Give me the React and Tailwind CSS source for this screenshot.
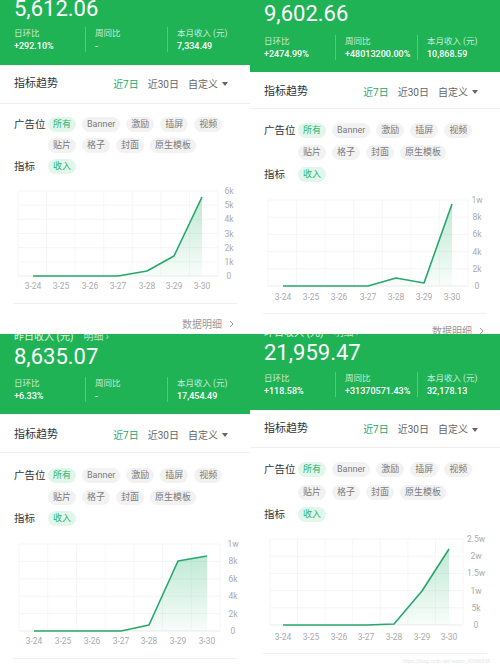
import React from 'react';

const FONT = { fontFamily: "Roboto, 'Noto Sans CJK SC', 'Noto Sans', sans-serif" };

const panels = [
  {
    key: 'tl',
    height: 'h-[334px]',
    header: 'h-[65px] pb-[13px]',
    numGap: 'mt-[5px]',
    value: '5,612.06',
    stats: [['日环比', '+292.10%'], ['周同比', '-'], ['本月收入 (元)', '7,334.49']],
    tabRow: 'h-[39px]',
    chipsBox: 'pt-[13px] gap-[6px]',
    chart: {
      top: 174, h: 129, cls: 'h-[129px]', left: 18, right: 218, plotTop: 191, plotBottom: 276,
      yLabels: ['6k', '5k', '4k', '3k', '2k', '1k', '0'], yLabelX: 229, xLabelY: 286,
      xs: [33, 61, 90, 118, 147, 174, 202], ys: [276, 276, 276, 276, 271, 256, 197],
    },
    link: 'h-[40px]',
  },
  {
    key: 'tr',
    height: 'h-[334px]',
    header: 'h-[72px] pb-[12px]',
    numGap: 'mt-[8px]',
    value: '9,602.66',
    stats: [['日环比', '+2474.99%'], ['周同比', '+48013200.00%'], ['本月收入 (元)', '10,868.59']],
    tabRow: 'h-[37px] pt-[4px]',
    chipsBox: 'pt-[14px] gap-[7px]',
    chart: {
      top: 182, h: 131, cls: 'h-[131px]', left: 18, right: 218, plotTop: 200, plotBottom: 286,
      yLabels: ['1w', '8k', '6k', '4k', '2k', '0'], yLabelX: 227, xLabelY: 297,
      xs: [33, 61, 89, 118, 146, 174, 202], ys: [286, 286, 286, 286, 278, 283, 204],
    },
    link: 'h-[34px]',
  },
  {
    key: 'bl',
    height: 'h-[333px]',
    header: 'h-[80px] pb-[12px]',
    numGap: 'mt-[7px]',
    value: '8,635.07',
    stats: [['日环比', '+6.33%'], ['周同比', '-'], ['本月收入 (元)', '17,454.49']],
    tabRow: 'h-[39px] pt-[4px]',
    chipsBox: 'pt-[15px] gap-[6.5px]',
    chart: {
      top: 192, h: 132, cls: 'h-[132px]', left: 19, right: 220, plotTop: 210, plotBottom: 297,
      yLabels: ['1w', '8k', '6k', '4k', '2k', '0'], yLabelX: 233, xLabelY: 307,
      xs: [34, 63, 92, 121, 149, 178, 207], ys: [297, 297, 297, 297, 291, 227, 222],
    },
    link: 'h-[40px]',
  },
  {
    key: 'br',
    height: 'h-[333px]',
    header: 'h-[76px] pb-[13px]',
    numGap: 'mt-[6px]',
    value: '21,959.47',
    stats: [['日环比', '+118.58%'], ['周同比', '+31370571.43%'], ['本月收入 (元)', '32,178.13']],
    tabRow: 'h-[38px] pt-[2px]',
    chipsBox: 'pt-[14px] gap-[7.5px]',
    chart: {
      top: 188, h: 131, cls: 'h-[131px]', left: 20, right: 213, plotTop: 205, plotBottom: 291,
      yLabels: ['2.5w', '2w', '1.5w', '1w', '5k', '0'], yLabelX: 226, xLabelY: 303,
      xs: [33, 61, 89, 116, 144, 172, 199], ys: [291, 291, 291, 291, 290, 257, 215],
    },
    watermark: true,
  },
];

const dates = ['3-24', '3-25', '3-26', '3-27', '3-28', '3-29', '3-30'];

function Chip({ label, active }) {
  return (
    <span
      className={
        active
          ? 'h-[15px] leading-[15px] px-[5px] rounded-full text-[9px] bg-[#e2f6eb] text-[#2bb36e]'
          : 'h-[15px] leading-[15px] px-[5px] rounded-full text-[9px] bg-[#f2f2f2] text-[#7a7a7a]'
      }
    >
      {label}
    </span>
  );
}

function Chart({ id, c }) {
  const rows = c.yLabels.length - 1;
  const step = (c.plotBottom - c.plotTop) / rows;
  const cell = (c.right - c.left) / 7;
  const pts = c.xs.map((x, i) => `${x},${c.ys[i]}`).join(' ');
  const area = `${c.xs[0]},${c.plotBottom} ${pts} ${c.xs[6]},${c.plotBottom}`;
  return (
    <svg className={`w-[250px] ${c.cls} block shrink-0`} viewBox={`0 ${c.top} 250 ${c.h}`} preserveAspectRatio="none">
      <defs>
        <linearGradient id={id} x1="0" y1="0" x2="0" y2="1">
          <stop offset="0" stopColor="#2bb673" stopOpacity="0.3" />
          <stop offset="1" stopColor="#2bb673" stopOpacity="0.03" />
        </linearGradient>
      </defs>
      {c.yLabels.map((l, i) => (
        <line key={l} x1={c.left} x2={c.right} y1={c.plotTop + i * step} y2={c.plotTop + i * step} stroke={i === rows ? '#e6e6e6' : '#f3f3f3'} strokeWidth="0.8" />
      ))}
      {Array.from({ length: 8 }).map((_, i) => (
        <line key={i} x1={c.left + i * cell} x2={c.left + i * cell} y1={c.plotTop} y2={c.plotBottom} stroke="#f4f4f4" strokeWidth="0.8" />
      ))}
      <polygon points={area} fill={`url(#${id})`} />
      <polyline points={pts} fill="none" stroke="#27a76c" strokeWidth="1.6" strokeLinejoin="round" />
      {c.yLabels.map((l, i) => (
        <text key={l} x={c.yLabelX} y={c.plotTop + i * step} fontSize="8.5" fill="#aaaaaa" textAnchor="middle" dominantBaseline="central" style={FONT}>
          {l}
        </text>
      ))}
      {dates.map((d, i) => (
        <text key={d} x={c.xs[i]} y={c.xLabelY} fontSize="8.5" fill="#aaaaaa" textAnchor="middle" dominantBaseline="central" style={FONT}>
          {d}
        </text>
      ))}
    </svg>
  );
}

function Panel({ p }) {
  return (
    <div className={`${p.height} w-[250px] overflow-hidden flex flex-col bg-white`}>
      <div className={`${p.header} shrink-0 overflow-hidden flex flex-col justify-end px-[14px] bg-[#20b356] text-white`}>
        <div className="text-[10px] leading-[14px] text-white/85 whitespace-nowrap">
          昨日收入 (元)<span className="ml-[10px] text-white/70">明细 ›</span>
        </div>
        <div className="text-[22px] leading-[26px] whitespace-nowrap">{p.value}</div>
        <div className={`${p.numGap} flex`}>
          {p.stats.map(([label, val], i) => (
            <div
              key={label}
              className={
                i === 0
                  ? 'w-[71px] flex flex-col gap-[1px]'
                  : i === 1
                  ? 'w-[82px] flex flex-col gap-[1px] border-l border-white/25 pl-[9px]'
                  : 'flex-1 flex flex-col gap-[1px] border-l border-white/25 pl-[9px]'
              }
            >
              <span className="text-[8.5px] leading-[12px] text-white/75 whitespace-nowrap">{label}</span>
              <span className="text-[9px] leading-[12px] font-medium whitespace-nowrap">{val}</span>
            </div>
          ))}
        </div>
      </div>

      <div className={`${p.tabRow} shrink-0 flex items-center px-[14px] border-b border-[#f0f0f0]`}>
        <span className="text-[11px] text-[#333333]">指标趋势</span>
        <div className="ml-auto flex items-center gap-[9px] pr-[8px] text-[10px]">
          <span className="text-[#22a86b]">近7日</span>
          <span className="text-[#666666]">近30日</span>
          <span className="text-[#666666] flex items-center gap-[4px]">
            自定义
            <svg width="6" height="4" viewBox="0 0 6 4">
              <path d="M0 0h6L3 4z" fill="#666666" />
            </svg>
          </span>
        </div>
      </div>

      <div className={`${p.chipsBox} shrink-0 flex flex-col px-[14px]`}>
        <div className="flex items-center h-[15px]">
          <span className="w-[34px] text-[10.5px] text-[#333333]">广告位</span>
          <div className="flex gap-[6px]">
            <Chip label="所有" active />
            <Chip label="Banner" />
            <Chip label="激励" />
            <Chip label="插屏" />
            <Chip label="视频" />
          </div>
        </div>
        <div className="flex items-center h-[15px]">
          <span className="w-[34px]" />
          <div className="flex gap-[6px]">
            <Chip label="贴片" />
            <Chip label="格子" />
            <Chip label="封面" />
            <Chip label="原生模板" />
          </div>
        </div>
        <div className="flex items-center h-[15px]">
          <span className="w-[34px] text-[10.5px] text-[#333333]">指标</span>
          <Chip label="收入" active />
        </div>
      </div>

      <Chart id={`g-${p.key}`} c={p.chart} />

      <div className="shrink-0 h-px mx-[13px] bg-[#f0f0f0]" />

      {p.link && (
        <div className={`${p.link} shrink-0 flex items-center justify-end gap-[7px] pr-[16px] text-[10px] text-[#999999]`}>
          数据明细
          <svg width="5" height="8" viewBox="0 0 5 8">
            <path d="M1 1l3 3-3 3" fill="none" stroke="#999999" strokeWidth="1" />
          </svg>
        </div>
      )}
      {p.watermark && (
        <div className="shrink-0 flex justify-end pr-[10px] pt-[4px] text-[5px] text-[#e6e6e6]">
          https://blog.csdn.net/weixin_43506858
        </div>
      )}
    </div>
  );
}

export default function App() {
  return (
    <div className="w-[500px] h-[667px] overflow-hidden bg-white grid grid-cols-[250px_250px]" style={FONT}>
      {panels.map((p) => (
        <Panel key={p.key} p={p} />
      ))}
    </div>
  );
}
